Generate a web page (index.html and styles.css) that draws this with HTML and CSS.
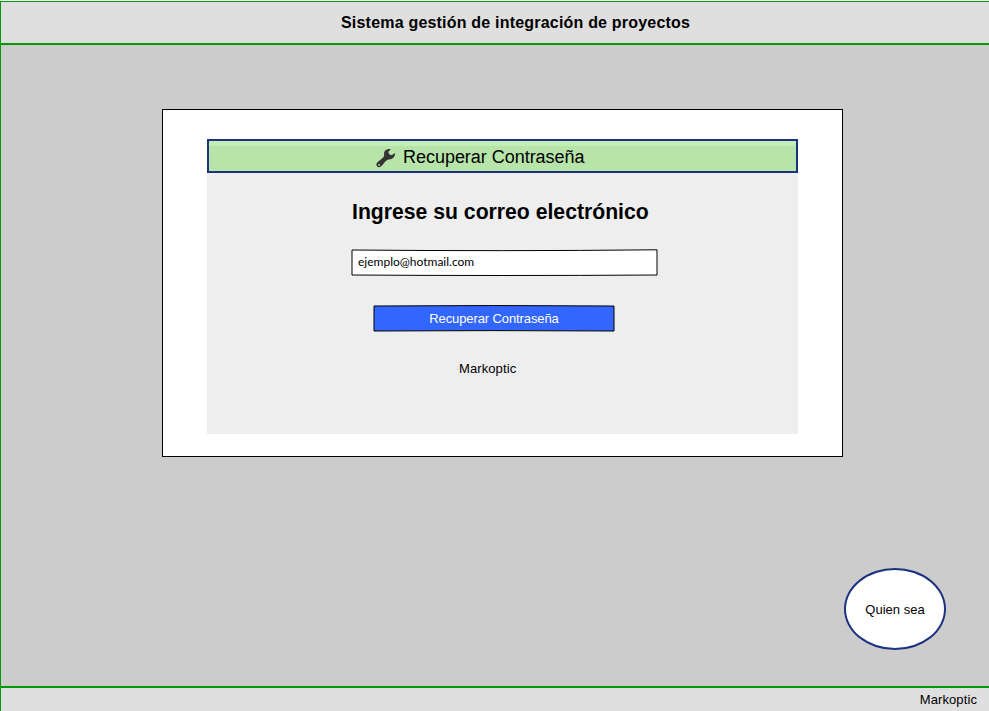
FILE: index.html
```html
<!DOCTYPE html>
<html lang="es">
<head>
<meta charset="utf-8">
<title>Sistema gestión de integración de proyectos</title>
<link rel="stylesheet" href="styles.css">
</head>
<body>
<div class="app">
  <header class="header"><h1 class="header-title">Sistema gestión de integración de proyectos</h1></header>
  <main class="main">
    <section class="card">
      <div class="panel">
        <div class="panel-bar">
          <svg class="wrench" width="20" height="20" viewBox="0 0 20 20"><path fill="#333" fill-rule="evenodd" d="M14.8 1.2C12.4.4 9.2 1.5 8.3 4.1C7.8 5.5 8.3 6.8 8 8C7.5 9.7 3.6 12.2 1.2 14.5C.1 15.8.1 17.6 1.2 18.6C2.3 19.6 4.1 19.3 5.1 18.3C7.1 16.2 9.4 12.7 11.3 11.9C12.7 11.3 13.8 11.8 15.4 11.1C17.5 10.3 19.3 8 19.1 5.1L15.6 7.2L12.9 6.1L12.4 3.8ZM3.1 16A.9.9 0 1 1 3.1 17.8A.9.9 0 1 1 3.1 16Z"/></svg>
          <span class="bar-text">Recuperar Contraseña</span>
        </div>
        <form class="form">
          <h2 class="form-title">Ingrese su correo electrónico</h2>
          <div class="field">
            <svg class="sketch" width="307" height="27" viewBox="0 0 307 27"><path fill="#fff" stroke="#000" d="M1 1Q150 2.4 306 .8L306 26Q150 27 1 26Z"/></svg>
            <span class="field-text">ejemplo@hotmail.com</span>
          </div>
          <div class="button">
            <svg class="sketch" width="242" height="27" viewBox="0 0 242 27"><path fill="#36f" stroke="#000" d="M1 1Q120 .1 241 1L241 26Q120 25.2 1 26Z"/></svg>
            <span class="button-text">Recuperar Contraseña</span>
          </div>
          <p class="brand">Markoptic</p>
        </form>
      </div>
    </section>
    <div class="bubble"><span>Quien sea</span></div>
  </main>
  <footer class="footer"><span>Markoptic</span></footer>
</div>
</body>
</html>
```
FILE: styles.css
```css
* { box-sizing: border-box; }
body { margin: 0; background: #fff; font-family: "Liberation Sans", Arial, sans-serif; font-size: 13px; color: #000; overflow: hidden; }
.app { height: 710px; margin-top: 1px; border-left: 1px solid #009900; border-top: 1px solid #009900; display: flex; flex-direction: column; }
.header { height: 43px; background: #dfdfdf; border-bottom: 2px solid #009900; padding-left: 340px; display: flex; align-items: center; }
.header-title { margin: 0; font-size: 16px; line-height: 18px; white-space: nowrap; letter-spacing: 0.2px; }
.main { flex: 1; background: #ccc; padding: 64px 43px 0 161px; display: flex; flex-direction: column; }
.card { width: 681px; height: 348px; background: #fff; border: 1px solid #000; padding: 29px 44px 0; }
.panel { height: 295px; background: #eee; }
.panel-bar { height: 34px; border: 2px solid #1b3281; background: linear-gradient(#c3efb7 5px, #b7e4a9 5px); display: flex; align-items: center; padding-left: 167px; }
.wrench { flex: none; margin-top: 3px; }
.bar-text { margin: 2px 0 0 7px; font-size: 18px; line-height: 20px; letter-spacing: -0.03px; white-space: nowrap; }
.form { display: flex; flex-direction: column; align-items: flex-start; padding-left: 144px; }
.form-title { margin: 26px 0 0 1px; font-size: 21.2px; line-height: 25px; white-space: nowrap; }
.field, .button { position: relative; height: 27px; display: flex; align-items: center; }
.field { width: 307px; margin-top: 25px; padding-left: 7px; }
.button { width: 242px; margin: 29px 0 0 22px; justify-content: center; color: #fff; }
.sketch { position: absolute; left: 0; top: 0; overflow: visible; }
.field-text, .button-text { position: relative; white-space: nowrap; }
.field-text { font-family: "Comic Sans MS", Lato, sans-serif; font-size: 12px; line-height: 16px; margin-bottom: 2px; }
.button-text { line-height: 15px; letter-spacing: -0.1px; }
.brand { margin: 29px 0 0 108px; line-height: 15px; letter-spacing: 0.1px; }
.bubble { align-self: flex-end; width: 102px; height: 82px; margin-top: 111px; border: 2px solid #1b3281; border-radius: 50%; background: #fff; display: flex; align-items: center; justify-content: center; }
.footer { height: 25px; background: #dfdfdf; border-top: 2px solid #009900; padding-right: 12px; display: flex; align-items: center; justify-content: flex-end; letter-spacing: 0.1px; }
```
